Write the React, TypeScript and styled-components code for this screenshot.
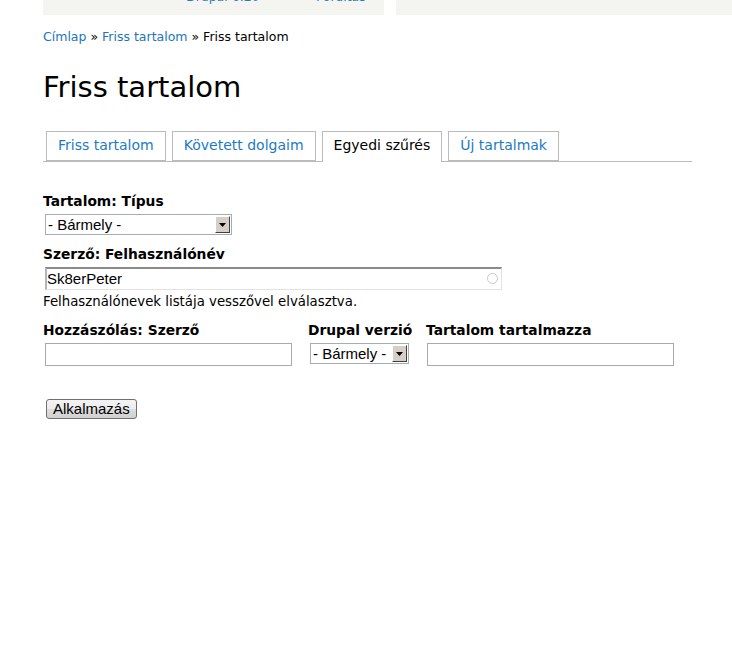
import styled, { createGlobalStyle } from "styled-components"

const GlobalStyle = createGlobalStyle`
    body {
        margin: 0;
        background: #fff;
        font-family: "DejaVu Sans", Verdana, sans-serif;
        color: #000;
    }
`

const tabs = [
    { label: "Friss tartalom", active: false },
    { label: "Követett dolgaim", active: false },
    { label: "Egyedi szűrés", active: true },
    { label: "Új tartalmak", active: false },
]

const Select = (props: { width: number; value: string }) => (
    <SelectWrap style={{ width: props.width }}>
        <SelectValue>{props.value}</SelectValue>
        <SelectArrow>
            <svg width="7" height="4" viewBox="0 0 7 4">
                <path d="M0 0h7L3.5 4z" fill="#000" />
            </svg>
        </SelectArrow>
    </SelectWrap>
)

const App = () => {
    return (
        <Page>
            <GlobalStyle />
            <TopBar>
                <TopBox $width={341}>
                    <TopLink $left={143}>Drupal 6.20</TopLink>
                    <TopLink $left={273}>Fordítás</TopLink>
                </TopBox>
                <TopBox $width={336} />
            </TopBar>

            <Breadcrumb>
                <Link>Címlap</Link> » <Link>Friss tartalom</Link> » Friss tartalom
            </Breadcrumb>

            <Title>Friss tartalom</Title>

            <Tabs>
                {tabs.map((t) => (
                    <Tab key={t.label} $active={t.active}>
                        {t.label}
                    </Tab>
                ))}
            </Tabs>

            <Form>
                <Field>
                    <Label>Tartalom: Típus</Label>
                    <Select width={187} value="- Bármely -" />
                </Field>

                <Field>
                    <Label>Szerző: Felhasználónév</Label>
                    <AutoInput>
                        <InputText>Sk8erPeter</InputText>
                        <Throbber />
                    </AutoInput>
                    <Description>Felhasználónevek listája vesszővel elválasztva.</Description>
                </Field>

                <Row>
                    <Field $width={265}>
                        <Label>Hozzászólás: Szerző</Label>
                        <TextInput $width={247} />
                    </Field>
                    <Field $width={118}>
                        <Label>Drupal verzió</Label>
                        <Select width={99} value="- Bármely -" />
                    </Field>
                    <Field>
                        <Label>Tartalom tartalmazza</Label>
                        <TextInput $width={247} $shift={1} />
                    </Field>
                </Row>

                <Button>Alkalmazás</Button>
            </Form>
        </Page>
    )
}

const Page = styled.div`
    width: 732px;
    height: 661px;
    overflow: hidden;
`

const TopBar = styled.div`
    display: flex;
    gap: 12px;
    padding-left: 43px;
`

const TopBox = styled.div<{ $width: number }>`
    position: relative;
    width: ${(p) => p.$width}px;
    height: 15px;
    background: #f4f4f0;
    overflow: hidden;
`

const TopLink = styled.span<{ $left: number }>`
    position: absolute;
    left: ${(p) => p.$left}px;
    top: -10px;
    font-size: 12.5px;
    line-height: 14px;
    color: #2a7cc1;
`

const Breadcrumb = styled.div`
    margin: 14px 0 0 43px;
    font-size: 12.5px;
    line-height: 16px;
`

const Link = styled.a`
    color: #1c75bc;
    text-decoration: none;
    cursor: pointer;
`

const Title = styled.h1`
    margin: 24px 0 0 43px;
    font-size: 29px;
    font-weight: normal;
    line-height: 36px;
`

const Tabs = styled.div`
    display: flex;
    gap: 6px;
    margin: 26px 0 0 43px;
    width: 646px;
    padding-left: 3px;
    border-bottom: 1px solid #bbb;
    height: 30px;
`

const Tab = styled.div<{ $active: boolean }>`
    box-sizing: border-box;
    height: ${(p) => (p.$active ? 31 : 30)}px;
    padding: 0 11px;
    border: 1px solid #bbb;
    border-bottom: ${(p) => (p.$active ? "none" : "1px solid #bbb")};
    background: #fff;
    font-size: 14px;
    line-height: 27px;
    color: ${(p) => (p.$active ? "#000" : "#1c7ac4")};
    cursor: pointer;
`

const Form = styled.div`
    margin: 31px 0 0 43px;
    display: flex;
    flex-direction: column;
    gap: 11px;
`

const Field = styled.div<{ $width?: number }>`
    display: flex;
    flex-direction: column;
    width: ${(p) => (p.$width ? `${p.$width}px` : "auto")};
    flex-shrink: 0;
`

const Row = styled.div`
    display: flex;
    margin-top: 1px;
`

const Label = styled.label`
    font-size: 13.8px;
    font-weight: bold;
    line-height: 17px;
    margin-bottom: 4px;
    white-space: nowrap;
`

const SelectWrap = styled.div`
    position: relative;
    box-sizing: border-box;
    height: 21px;
    margin-left: 2px;
    border: 1px solid #a5acb2;
    background: #fff;
`

const SelectValue = styled.div`
    font-family: "Liberation Sans", Arial, sans-serif;
    font-size: 15px;
    line-height: 19px;
    padding-left: 2px;
    white-space: nowrap;
`

const SelectArrow = styled.div`
    position: absolute;
    top: 1px;
    right: 1px;
    width: 15px;
    height: 17px;
    box-sizing: border-box;
    background: #d4d0c8;
    border: 1px solid;
    border-color: #fff #404040 #404040 #fff;
    display: flex;
    align-items: center;
    justify-content: center;
`

const AutoInput = styled.div`
    position: relative;
    box-sizing: border-box;
    width: 457px;
    height: 23px;
    margin-left: 2px;
    border: 1px solid #e2e2e2;
    border-top: 2px solid #8a8a8a;
    border-left: 2px solid #b5b5b5;
    background: #fff;
`

const InputText = styled.div`
    font-family: "Liberation Sans", Arial, sans-serif;
    font-size: 15px;
    line-height: 20px;
`

const Throbber = styled.div`
    position: absolute;
    right: 3px;
    top: 4px;
    width: 9px;
    height: 9px;
    border-radius: 50%;
    border: 1.5px solid #c8c8c8;
`

const Description = styled.div`
    font-size: 13.3px;
    line-height: 16px;
    margin-top: 4px;
`

const TextInput = styled.div<{ $width: number; $shift?: number }>`
    box-sizing: border-box;
    width: ${(p) => p.$width}px;
    height: 23px;
    margin-left: ${(p) => 2 - (p.$shift || 0)}px;
    border: 1px solid #a9a9a9;
    background: #fff;
`

const Button = styled.button`
    align-self: flex-start;
    margin: 22px 0 0 3px;
    height: 20px;
    padding: 0 6px;
    font-family: "Liberation Sans", Arial, sans-serif;
    font-size: 15px;
    line-height: 16px;
    color: #000;
    background: linear-gradient(#f3f3f3, #ececec 50%, #dedede 50%, #d0d0d0);
    border: 1px solid #707070;
    border-radius: 3px;
`

export default App
